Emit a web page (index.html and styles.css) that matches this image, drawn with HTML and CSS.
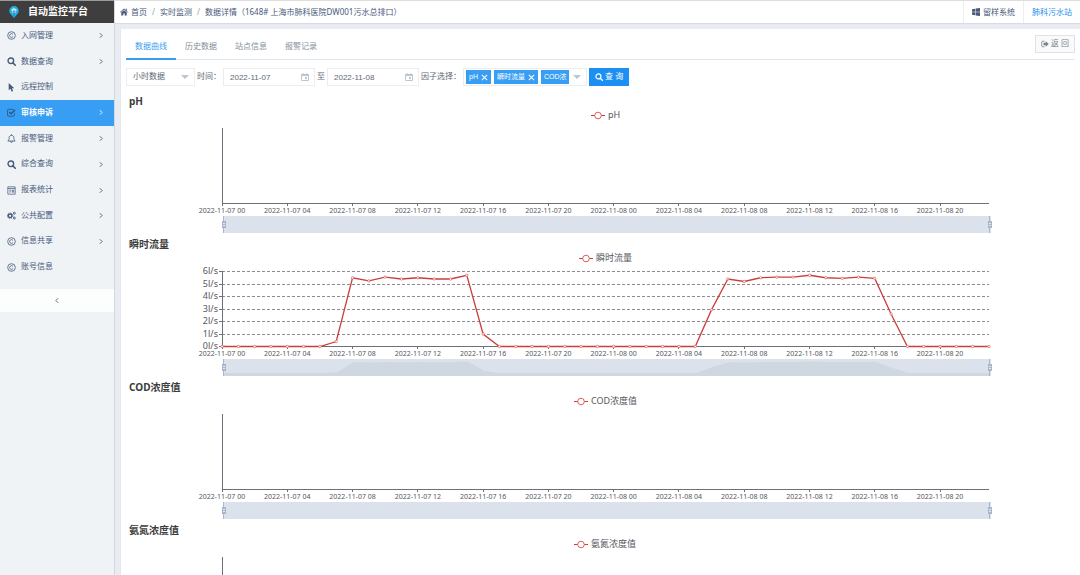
FILE: index.html
```html
<!DOCTYPE html>
<html lang="zh-CN">
<head>
    <meta charset="UTF-8">
    <meta name="viewport" content="width=device-width, initial-scale=1.0">
    <title>自动监控平台</title>
    <link rel="stylesheet" href="styles.css">
</head>
<body>
    <!-- shared icons -->
    <svg class="sprite" aria-hidden="true">
        <symbol id="i-copy" viewBox="0 0 16 16"><circle cx="8" cy="8" r="6.8" fill="none" stroke="currentColor" stroke-width="1.4"/><path d="M10.8 6.2A3.3 3.3 0 1 0 10.8 9.8" fill="none" stroke="currentColor" stroke-width="1.4"/></symbol>
        <symbol id="i-search" viewBox="0 0 16 16"><circle cx="6.8" cy="6.8" r="5" fill="none" stroke="currentColor" stroke-width="2.4"/><path d="M10.5 10.5l4.2 4.2" stroke="currentColor" stroke-width="2.8" stroke-linecap="round"/></symbol>
        <symbol id="i-pointer" viewBox="0 0 16 16"><path d="M3 0v13l3.2-2.8L8.3 15.5l2.6-1.1L8.8 9.3H13z" fill="currentColor"/></symbol>
        <symbol id="i-check" viewBox="0 0 16 16"><path d="M13 8.5v4.500a1.500 1.500 0 0 1-1.500 1.500h-9A1.500 1.500 0 0 1 1 13V4a1.500 1.500 0 0 1 1.500-1.500H11" fill="none" stroke="currentColor" stroke-width="1.5"/><path d="M4 7l3.2 3.2L14.5 3" fill="none" stroke="currentColor" stroke-width="2.4"/></symbol>
        <symbol id="i-bell" viewBox="0 0 16 16"><path d="M1.500 12.500C3.500 10.500 3.800 9 3.800 6.500 3.800 4 5.500 2.500 8 2.500s4.200 1.500 4.200 4c0 2.500.3 4 2.300 6zM8 .500v2M6.200 13a1.800 1.800 0 0 0 3.600 0" fill="none" stroke="currentColor" stroke-width="1.5"/></symbol>
        <symbol id="i-report" viewBox="0 0 16 16"><path d="M1.500 1.500h13v13h-13zM1.500 4.500h13M4 7.500h4M4 10.500h3M9.500 7.500h2.500v3.500H9.500z" fill="none" stroke="currentColor" stroke-width="1.3"/></symbol>
        <symbol id="i-cogs" viewBox="0 0 16 16"><circle cx="5.5" cy="8.5" r="3.3" fill="none" stroke="currentColor" stroke-width="2.6"/><circle cx="5.5" cy="8.5" r="4.9" fill="none" stroke="currentColor" stroke-width="1.4" stroke-dasharray="2 1.85"/><circle cx="13" cy="4" r="1.8" fill="none" stroke="currentColor" stroke-width="1.7"/><circle cx="13" cy="12.5" r="1.8" fill="none" stroke="currentColor" stroke-width="1.7"/></symbol>
        <symbol id="i-right" viewBox="0 0 8 8"><path d="M2.500 1l3 3-3 3" fill="none" stroke="currentColor" stroke-width="1.2"/></symbol>
        <symbol id="i-down" viewBox="0 0 8 8"><path d="M0 2h8L4 6z" fill="currentColor"/></symbol>
        <symbol id="i-date" viewBox="0 0 8 8"><path d="M.5 1.500h7v6h-7zM.5 2.500h7M2 0v2M6 0v2" fill="none" stroke="currentColor"/><path d="M4 4h2v2H4z" fill="currentColor"/></symbol>
        <symbol id="i-close" viewBox="0 0 8 8"><path d="M1 1l6 6M7 1L1 7" stroke="currentColor" stroke-width="1.2"/></symbol>
        <symbol id="i-home" viewBox="0 0 16 16"><path d="M8 1L0 8l1 1.200L8 3.200l7 6L16 8l-2.500-2.200V1.500h-2v2.500zM2.500 9.200V15H6.500v-4h3v4h4V9.200L8 4.500z" fill="currentColor"/></symbol>
        <symbol id="i-windows" viewBox="0 0 16 16"><path d="M0 2.300l6.500-.9v6.100H0zM7.500 1.200L16 0v7.500H7.500zM0 8.500h6.500v6.100L0 13.700zM7.500 8.500H16V16l-8.500-1.200z" fill="currentColor"/></symbol>
        <symbol id="i-out" viewBox="0 0 16 16"><path d="M7 2.500H3A1.500 1.500 0 0 0 1.500 4v8A1.500 1.500 0 0 0 3 13.500h4" fill="none" stroke="currentColor" stroke-width="1.6"/><path d="M5 5.500h4.500V2.500L15.500 8l-6 5.500v-3H5z" fill="currentColor"/></symbol>
    </svg>

    <div class="sidebar">
        <div class="logo">
            <svg class="logo-icon" viewBox="0 0 10 12"><path d="M5 0a4.700 4.700 0 0 1 4.700 4.700C9.700 7.500 7 9 5 12 3 9 .3 7.500.3 4.700A4.700 4.700 0 0 1 5 0z" fill="#25aee0"/><path d="M2.300 3.500L5 2l2.700 1.500L6.500 7H3.500z" fill="#bfeaf8"/><path d="M5 4v6M3.500 5L5 6.500 6.500 5" stroke="#1887ba" stroke-width=".8" fill="none"/></svg>
            <span>自动监控平台</span>
        </div>
        <nav class="menu">
            <a href="#"><svg class="icon"><use href="#i-copy"/></svg>入网管理<svg class="arrow"><use href="#i-right"/></svg></a>
            <a href="#"><svg class="icon"><use href="#i-search"/></svg>数据查询<svg class="arrow"><use href="#i-right"/></svg></a>
            <a href="#"><svg class="icon"><use href="#i-pointer"/></svg>远程控制</a>
            <a href="#" class="active"><svg class="icon"><use href="#i-check"/></svg>审核申诉<svg class="arrow"><use href="#i-right"/></svg></a>
            <a href="#"><svg class="icon"><use href="#i-bell"/></svg>报警管理<svg class="arrow"><use href="#i-right"/></svg></a>
            <a href="#"><svg class="icon"><use href="#i-search"/></svg>综合查询<svg class="arrow"><use href="#i-right"/></svg></a>
            <a href="#"><svg class="icon"><use href="#i-report"/></svg>报表统计<svg class="arrow"><use href="#i-right"/></svg></a>
            <a href="#"><svg class="icon"><use href="#i-cogs"/></svg>公共配置<svg class="arrow"><use href="#i-right"/></svg></a>
            <a href="#"><svg class="icon"><use href="#i-copy"/></svg>信息共享<svg class="arrow"><use href="#i-right"/></svg></a>
            <a href="#"><svg class="icon"><use href="#i-copy"/></svg>账号信息</a>
        </nav>
        <button class="collapse" type="button" aria-label="收起菜单"><svg class="arrow"><use href="#i-right"/></svg></button>
    </div>

    <div class="main">
        <div class="header">
            <div class="breadcrumb">
                <a href="#"><svg class="home"><use href="#i-home"/></svg>首页</a>
                <span class="sep">/</span>
                <a href="#">实时监测</a>
                <span class="sep">/</span>
                <span>数据详情（1648# 上海市肺科医院DW001污水总排口）</span>
            </div>
            <div class="header-links">
                <a href="#"><svg class="win"><use href="#i-windows"/></svg>留样系统</a>
                <a href="#" class="user">肺科污水站</a>
            </div>
        </div>

        <div class="card">
            <div class="tabs">
                <a href="#" class="active">数据曲线</a>
                <a href="#">历史数据</a>
                <a href="#">站点信息</a>
                <a href="#">报警记录</a>
                <button class="back" type="button"><svg><use href="#i-out"/></svg>返 回</button>
            </div>

            <form class="filter">
                <div class="field field-type">
                    <select aria-label="数据类型">
                        <option>小时数据</option>
                        <option>日数据</option>
                    </select>
                    <svg class="caret"><use href="#i-down"/></svg>
                </div>
                <label for="start">时间：</label>
                <div class="field field-date">
                    <input id="start" type="text" value="2022-11-07">
                    <svg class="caret"><use href="#i-date"/></svg>
                </div>
                <label for="end">至</label>
                <div class="field field-date">
                    <input id="end" type="text" value="2022-11-08">
                    <svg class="caret"><use href="#i-date"/></svg>
                </div>
                <span class="factor-label" id="factor">因子选择：</span>
                <div class="field field-factor" role="group" aria-labelledby="factor">
                    <div class="tags">
                        <span class="tag">pH<button type="button" aria-label="移除 pH"><svg><use href="#i-close"/></svg></button></span>
                        <span class="tag">瞬时流量<button type="button" aria-label="移除 瞬时流量"><svg><use href="#i-close"/></svg></button></span>
                        <span class="tag">COD浓</span>
                    </div>
                    <svg class="caret"><use href="#i-down"/></svg>
                </div>
                <button class="query" type="button"><svg><use href="#i-search"/></svg>查 询</button>
            </form>

            <div class="charts">
                <div class="chart" data-name="pH"></div>
                <div class="chart" data-name="瞬时流量" data-unit="l/s"></div>
                <div class="chart" data-name="COD浓度值"></div>
                <div class="chart" data-name="氨氮浓度值"></div>
            </div>
        </div>
    </div>

    <script src="charts.js"></script>
</body>
</html>
```
FILE: styles.css
```css
* {
    box-sizing: border-box;
}

body {
    margin: 0;
    height: 100vh;
    display: flex;
    overflow: hidden;
    font-family: 'Liberation Sans', 'Noto Sans CJK SC', sans-serif;
    font-size: 8px;
    line-height: 12px;
    color: #48597a;
    background-color: #e9edf3;
}

a {
    color: inherit;
    text-decoration: none;
}

button,
input,
select {
    font: inherit;
    color: inherit;
    margin: 0;
    padding: 0;
    border: 0;
    background: none;
}

.sprite {
    display: none;
}

/* sidebar */
.sidebar {
    width: 115px;
    flex: none;
    background-color: #eff3f6;
    border-right: 1px solid #d3d8df;
}

.logo {
    display: flex;
    align-items: center;
    gap: 9px;
    height: 23px;
    padding-left: 9px;
    border-top: 1px solid #9a9a9a;
    background-color: #3e3e3e;
    color: #ffffff;
    font-size: 10px;
    font-weight: 700;
}

.logo-icon {
    width: 10px;
    height: 12px;
}

.menu {
    display: grid;
    grid-auto-rows: 1fr;
    height: 257px;
    margin-bottom: 9px;
}

.menu a {
    display: flex;
    align-items: center;
    padding: 0 10px 0 7px;
}

.menu .icon {
    width: 9px;
    height: 9px;
    margin-right: 5px;
}

.arrow {
    width: 6px;
    height: 7px;
    margin-left: auto;
}

.menu .active {
    background-color: #379ef4;
    color: #ffffff;
    font-weight: 700;
}

.menu .active .icon {
    color: #2d5680;
}

.collapse {
    display: flex;
    align-items: center;
    justify-content: center;
    width: 100%;
    height: 23px;
    background-color: #fcfdfd;
}

.collapse .arrow {
    margin: 0;
    transform: rotate(180deg);
}

/* header */
.main {
    flex: 1;
    min-width: 0;
    display: flex;
    flex-direction: column;
}

.header {
    display: flex;
    justify-content: space-between;
    flex: none;
    height: 23px;
    border-top: 1px solid #dedede;
    background-color: #ffffff;
    box-shadow: 0 1px 1px #d9dde3;
    font-family: 'Noto Sans', 'Noto Sans CJK SC', sans-serif;
}

.breadcrumb {
    display: flex;
    align-items: center;
    gap: 5px;
    padding-left: 5px;
}

.breadcrumb a,
.header-links a {
    display: flex;
    align-items: center;
    gap: 3px;
}

.breadcrumb .sep {
    color: #9aa3b0;
}

.home,
.win {
    width: 8px;
    height: 8px;
}

.header-links {
    display: flex;
}

.header-links a {
    padding: 0 8px;
    border-left: 1px solid #eeeeee;
}

.header-links .user {
    color: #2390ee;
}

/* content */
.card {
    flex: 1;
    min-height: 0;
    overflow: hidden;
    margin: 6px 0 0 5px;
    padding: 6px 5px 0;
    background-color: #ffffff;
    border-left: 1px solid #e3e8ef;
}

.tabs {
    display: flex;
    height: 25px;
    border-bottom: 1px solid #dfe4ed;
    color: #8290a0;
}

.tabs a {
    padding: 6px 9px 5px;
    height: 25px;
}

.tabs .active {
    color: #379ef4;
    border-bottom: 2px solid #379ef4;
}

.back {
    display: flex;
    align-items: center;
    gap: 2px;
    height: 18px;
    margin-left: auto;
    padding: 0 5px;
    border: 1px solid #e0e4e8;
    background-color: #fafafa;
    color: #76838f;
}

.back svg,
.query svg {
    width: 8px;
    height: 8px;
}

.filter {
    display: flex;
    align-items: center;
    gap: 2px;
    margin: 8px 0 5px;
    color: #606875;
}

.field {
    display: flex;
    align-items: center;
    height: 18px;
    border: 1px solid #ebedf0;
}

.field .caret {
    flex: none;
    width: 8px;
    height: 8px;
    margin-right: 5px;
    color: #bcc5d4;
}

.field input,
.field select {
    flex: 1;
    min-width: 0;
    height: 16px;
    padding-left: 6px;
    appearance: none;
    outline: none;
}

.field-type {
    width: 69px;
}

.field-date {
    width: 92px;
}

.field-factor {
    width: 124px;
    padding-left: 2px;
}

.factor-label {
    width: 40px;
}

.tags {
    flex: 1;
    min-width: 0;
    display: flex;
    gap: 3px;
    margin-right: 4px;
    overflow: hidden;
}

.tag {
    display: flex;
    align-items: center;
    flex: none;
    gap: 3px;
    height: 14px;
    padding: 0 3px;
    background-color: #379ef4;
    color: #ffffff;
    font-size: 7px;
    white-space: nowrap;
}

.tag:last-child {
    flex: 1;
    padding-right: 0;
}

.tag button {
    display: flex;
}

.tag svg {
    width: 7px;
    height: 7px;
}

.query {
    display: flex;
    align-items: center;
    gap: 2px;
    height: 18px;
    padding: 0 6px;
    background-color: #1c8ff2;
    color: #ffffff;
}

/* charts */
.charts {
    margin-right: -10px;
}

.chart h3 {
    margin: 0;
    padding-left: 3px;
    font-family: 'Noto Sans', 'Noto Sans CJK SC', sans-serif;
    font-size: 10px;
    line-height: 20px;
    color: #3c3c3c;
}

.chart svg {
    display: block;
    width: 100%;
    height: 123px;
    overflow: visible;
    font-family: 'Noto Sans', 'Noto Sans CJK SC', sans-serif;
    fill: none;
}

.chart text {
    fill: #55575c;
}

.chart .legend,
.chart .y-label {
    font-size: 9px;
}

.chart .x-label {
    font-size: 7px;
    text-anchor: middle;
}

.chart .y-label {
    text-anchor: end;
}

.chart .axis {
    stroke: #6e7079;
    shape-rendering: crispEdges;
}

.chart .split {
    stroke: #8c8c8c;
    stroke-dasharray: 3 2;
    shape-rendering: crispEdges;
}

.chart .series {
    stroke: #cb3f3b;
}

.chart .dot {
    stroke: #d9605c;
    fill: #ffffff;
}

.chart .slider {
    fill: #dbe2ec;
}

.chart .shadow {
    fill: #cfd7e1;
}

.chart .handle {
    fill: #a7b7cc;
}

.chart .grip {
    stroke: #e4ebf4;
}
```
FILE: charts.js
```js
const flow = [
    0, 0, 0, 0, 0, 0, 0, 0.4, 5.5, 5.25, 5.55, 5.4, 5.5, 5.4, 5.4, 5.7,
    1, 0, 0, 0, 0, 0, 0, 0, 0, 0, 0, 0, 0, 0, 2.95, 5.4,
    5.2, 5.5, 5.55, 5.55, 5.7, 5.5, 5.45, 5.55, 5.45, 2.6, 0, 0, 0, 0, 0, 0
];
const series = { '瞬时流量': flow };

const TOP = 17;
const BOTTOM = 92;
const HOURS = 48;

function drawChart(el) {
    const name = el.dataset.name;
    const unit = el.dataset.unit;
    const data = series[name];
    const width = el.clientWidth;
    const left = Math.round(width * 0.1);
    const right = Math.round(width * 0.9);
    const x = i => left + (right - left) * i / (HOURS - 1);
    const y = v => BOTTOM - (BOTTOM - TOP) * v / 6;
    let out = '';

    if (unit) {
        for (let v = 0; v <= 6; v++) {
            if (v) out += `<path class="split" d="M${left} ${Math.round(y(v)) + 0.5}H${right}"/>`;
            out += `<path class="axis" d="M${left - 3} ${Math.round(y(v)) + 0.5}h3"/>`;
            out += `<text class="y-label" x="${left - 4}" y="${Math.round(y(v)) + 3}">${v}${unit}</text>`;
        }
    }
    out += `<path class="axis" d="M${left + 0.5} ${TOP}V${BOTTOM + 0.5}H${right}"/>`;

    for (let i = 0; i < HOURS; i += 4) {
        const day = i < 24 ? '07' : '08';
        const hour = String(i % 24).padStart(2, '0');
        out += `<path class="axis" d="M${Math.floor(x(i)) + 0.5} ${BOTTOM}v3"/>`;
        out += `<text class="x-label" x="${x(i)}" y="102">2022-11-${day} ${hour}</text>`;
    }

    // zoom slider
    out += `<rect class="slider" x="${left + 1}" y="105" width="${right - left + 1}" height="17"/>`;
    if (data) {
        const shadow = data.map((v, i) => `${x(i) + 1},${119 - v * 2}`).join(' ');
        out += `<polygon class="shadow" points="${left + 1},122 ${shadow} ${right + 1},122"/>`;
    }
    [left + 1, right].forEach(h => {
        out += `<path class="handle" d="M${h} 105h1v17h-1zM${h - 1} 110h4v7h-4z"/>`;
        out += `<path class="grip" d="M${h} 112.5h2M${h} 114.5h2"/>`;
    });

    if (data) {
        out += `<polyline class="series" stroke-width="1.3" points="${data.map((v, i) => `${x(i)},${y(v) + 0.5}`).join(' ')}"/>`;
        out += data.map((v, i) => `<circle class="dot" cx="${x(i)}" cy="${y(v) + 0.5}" r="1.2" stroke-width="0.7"/>`).join('');
    }

    out += `<g class="legend-item"><path class="series" d="M0 4.5h14"/><circle class="dot" cx="7" cy="4.5" r="3.3"/><text class="legend" x="17" y="7">${name}</text></g>`;
    el.innerHTML = `<h3>${name}</h3><svg>${out}</svg>`;

    // centre the legend on the chart
    const legend = el.querySelector('.legend-item');
    const legendWidth = 17 + legend.querySelector('text').getComputedTextLength();
    legend.setAttribute('transform', `translate(${Math.round((width - legendWidth) / 2)} 0)`);
}

function drawAll() {
    document.querySelectorAll('.chart').forEach(drawChart);
}

drawAll();
window.addEventListener('resize', drawAll);
```
